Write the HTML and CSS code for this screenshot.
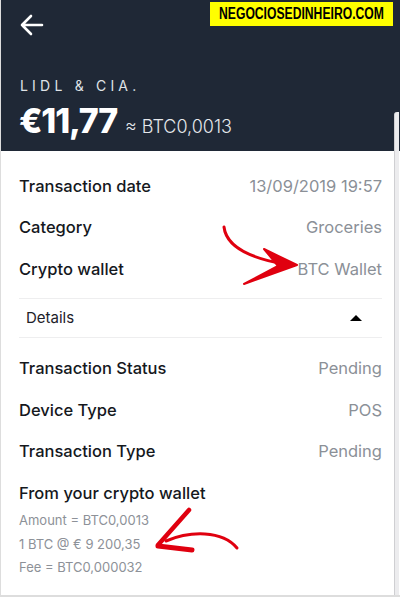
FILE: index.html
```html
<!DOCTYPE html>
<html lang="en">
<head>
    <meta charset="UTF-8">
    <title>Transaction</title>
    <link rel="stylesheet" href="styles.css">
</head>
<body>
    <div class="screen">
        <header class="top">
            <svg class="back" width="26" height="22" viewBox="0 0 26 22">
                <path d="M22 11H2M11 2L2 11l9 9" fill="none" stroke="#fff" stroke-width="2.6" stroke-linecap="round" stroke-linejoin="round"/>
            </svg>
            <div class="merchant">LIDL &amp; CIA.</div>
            <div class="amount">
                <span class="eur">€11,77</span>
                <span class="btc">≈ BTC0,0013</span>
            </div>
        </header>

        <div class="badge"><span>NEGOCIOSEDINHEIRO.COM</span></div>
        <div class="scroll"></div>

        <main class="content">
            <div class="info">
                <div class="row"><span class="label">Transaction date</span><span class="value">13/09/2019 19:57</span></div>
                <div class="row"><span class="label">Category</span><span class="value">Groceries</span></div>
                <div class="row"><span class="label">Crypto wallet</span><span class="value">BTC Wallet</span></div>
            </div>

            <div class="details">
                <span>Details</span>
                <span class="caret"></span>
            </div>

            <div class="info more">
                <div class="row"><span class="label">Transaction Status</span><span class="value">Pending</span></div>
                <div class="row"><span class="label">Device Type</span><span class="value">POS</span></div>
                <div class="row"><span class="label">Transaction Type</span><span class="value">Pending</span></div>
            </div>

            <div class="wallet">
                <div class="label">From your crypto wallet</div>
                <ul class="lines">
                    <li>Amount = BTC0,0013</li>
                    <li>1 BTC @ € 9 200,35</li>
                    <li>Fee = BTC0,000032</li>
                </ul>
            </div>
        </main>

        <!-- red marker arrows drawn over the screenshot -->
        <svg class="marks" width="400" height="597" viewBox="0 0 400 597">
            <g fill="#e0000f" stroke="#e0000f" stroke-linecap="round" stroke-linejoin="round">
                <path d="M224 227 C226 244 244 257 284 264" fill="none" stroke-width="3"/>
                <path d="M264 249 L297 265 L244 284 L278 266 Z" stroke-width="2"/>
                <path d="M189 510 L158 545" fill="none" stroke-width="4.5"/>
                <path d="M158 546 L192 550" fill="none" stroke-width="5"/>
                <path d="M166 541 C190 531 222 530 237 548" fill="none" stroke-width="3"/>
            </g>
        </svg>
    </div>
</body>
</html>
```

FILE: styles.css
```css
body { margin: 0; background: #fff; font-family: Inter, "Open Sans", sans-serif; }
.screen { position: relative; width: 400px; height: 597px; overflow: hidden; box-sizing: border-box; border-left: 1px solid #ddd; border-bottom: 2px solid #ddd; }

.top { background: #1f2836; height: 151px; padding: 14px 0 0 19px; box-sizing: border-box; color: #fff; }
.back { display: block; }
.merchant { margin-top: 41px; font-size: 14px; letter-spacing: 4.2px; color: #dfe2e6; line-height: 17px; }
.amount { display: flex; align-items: baseline; gap: 8px; margin-top: 7px; margin-left: -1px; }
.eur { font-size: 34px; font-weight: 800; letter-spacing: -1.2px; line-height: 40px; }
.btc { font-size: 18px; font-weight: 300; color: #e4e7eb; }

.badge { position: absolute; top: 2px; left: 209px; width: 183px; height: 24px; display: flex; justify-content: center; background: #ffff00; overflow: hidden; }
.badge span { flex: none; color: #000; font-family: "Liberation Sans", Arial, sans-serif; font-weight: bold; font-size: 16px; line-height: 24px; transform: scaleX(0.76); white-space: nowrap; }
.scroll { position: absolute; top: 112px; right: 1px; bottom: 0; width: 4px; background: #ececee; border-left: 1px solid #cfcfd2; border-radius: 3px 0 0 0; }

.content { padding: 14px 18px 0 18px; }
.row { display: flex; justify-content: space-between; align-items: center; height: 41.5px; }
.label { font-size: 16.5px; font-weight: 500; color: #15181d; }
.value { font-size: 16.5px; color: #8b9097; }

.details { display: flex; justify-content: space-between; align-items: center; margin-top: 8px; height: 38px; padding: 0 20px 0 7px; border-top: 1px solid #eeeeef; border-bottom: 1px solid #eeeeef; font-size: 15px; color: #1d2129; }
.caret { width: 0; height: 0; border-left: 6px solid transparent; border-right: 6px solid transparent; border-bottom: 6px solid #000; }

.more { margin-top: 10px; }
.wallet { padding-top: 8px; }
.wallet .label { line-height: 26px; }
.lines { list-style: none; margin: 3px 0 0 0; padding: 0; }
.lines li { font-size: 13px; line-height: 23.5px; color: #8d9198; }

.marks { position: absolute; top: 0; left: -1px; pointer-events: none; }
```
